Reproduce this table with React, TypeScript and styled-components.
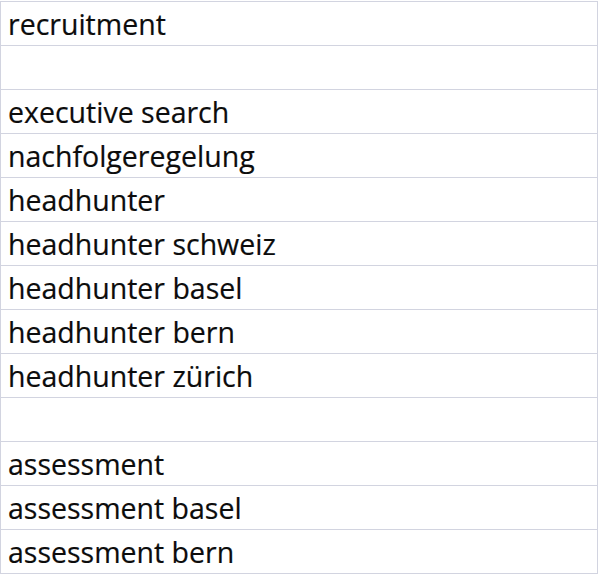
import React from "react";
import styled, { createGlobalStyle } from "styled-components";

const Global = createGlobalStyle`
  html, body { margin: 0; padding: 0; background: #ffffff; }
  body { width: 600px; height: 577px; overflow: hidden; }
`;

const Sheet = styled.div`
  margin-top: 1px;
  width: 598px;
  box-sizing: border-box;
  border-left: 1px solid #d2d4e0;
  border-right: 1px solid #d2d4e0;
  border-top: 1px solid #d2d4e0;
  display: flex;
  flex-direction: column;
  background: #ffffff;
`;

const Row = styled.div`
  height: 44px;
  box-sizing: border-box;
  border-bottom: 1px solid #d2d4e0;
  display: flex;
  align-items: flex-end;
  padding: 0 0 7px 7px;
  font-family: "Open Sans", "Liberation Sans", sans-serif;
  font-size: 28.5px;
  font-weight: 400;
  line-height: 1;
  color: #0c0c0c;
  white-space: nowrap;
  -webkit-text-stroke: 0.2px #0c0c0c;
`;

const items = [
  "recruitment",
  "",
  "executive search",
  "nachfolgeregelung",
  "headhunter",
  "headhunter schweiz",
  "headhunter basel",
  "headhunter bern",
  "headhunter zürich",
  "",
  "assessment",
  "assessment basel",
  "assessment bern",
];

export default function App() {
  return (
    <>
      <Global />
      <Sheet>
        {items.map((t, i) => (
          <Row key={i}>{t || "\u00a0"}</Row>
        ))}
      </Sheet>
    </>
  );
}
